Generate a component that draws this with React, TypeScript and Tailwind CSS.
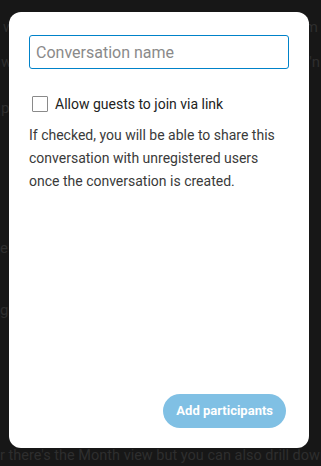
import React from "react";

export default function App() {
  return (
    <div className="relative h-[466px] w-[321px] overflow-hidden bg-[#171717] font-['Roboto',sans-serif]">
      {/* dimmed page behind the dialog */}
      <div className="flex flex-col text-[15px] leading-[20px] text-[#2e2e2e]">
        <div className="mt-[17px] flex justify-between pr-[3px] pl-[3px]">
          <span>w</span>
          <span>m</span>
        </div>
        <div className="mt-[15px] flex justify-between pr-[1px] pl-[1px]">
          <span>w</span>
          <span>'n</span>
        </div>
        <div className="mt-[26px] pl-[1px]">p</div>
        <div className="mt-[120px]">e</div>
        <div className="mt-[42px]">g</div>
        <div className="mt-[126px] text-[14.5px] whitespace-nowrap">r there's the Month view but you can also drill down</div>
      </div>

      <div className="absolute top-[12px] left-[9px] flex h-[436px] w-[300px] flex-col rounded-[12px] bg-white px-[20px] pt-[23px] pb-[20px]">
        <input
          type="text"
          placeholder="Conversation name"
          className="h-[34px] w-full rounded-[3px] border border-[#0082c9] px-[6px] text-[16px] text-[#222] outline-none placeholder:text-[#8a8a8a]"
        />

        <label className="mt-[25px] flex items-center gap-[7px] pl-[3px]">
          <span className="h-[16px] w-[16px] rounded-[1px] border border-[#8a8a8a] bg-white" />
          <span className="text-[14px] leading-[20px] text-[#222]">Allow guests to join via link</span>
        </label>

        <p className="mt-[10px] text-[14px] leading-[23px] text-[#3a3a3a]">
          If checked, you will be able to share this conversation with unregistered users once the conversation is
          created.
        </p>

        <div className="mt-auto flex justify-end pr-[3px]">
          <button className="h-[34px] rounded-full bg-[#80c0e4] px-[13px] text-[13px] font-bold text-white">
            Add participants
          </button>
        </div>
      </div>
    </div>
  );
}
